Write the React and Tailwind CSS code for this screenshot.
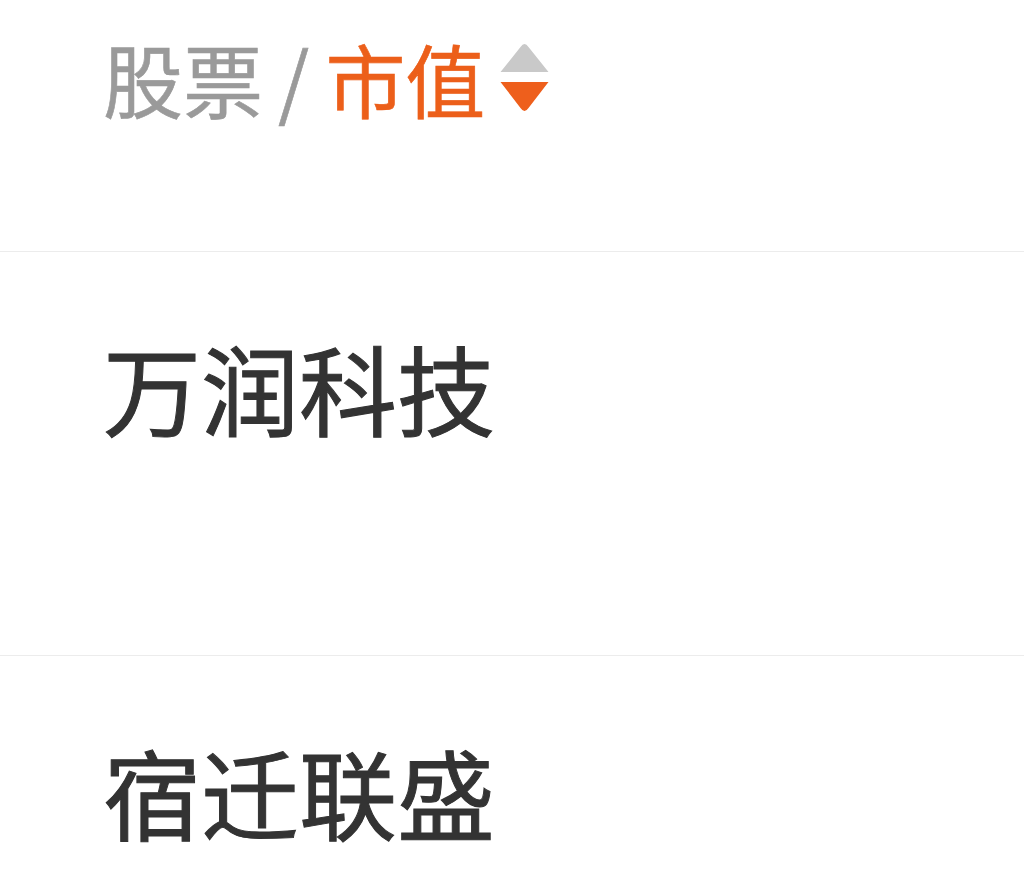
import React from "react";

const rows = ["万润科技", "宿迁联盛"];

function SortIcon() {
  return (
    <svg viewBox="0 0 50 70" className="ml-[14px] h-[70px] w-[51px]" aria-hidden="true">
      <path d="M25 2 Q27 2 29 5 L49 30 L1 30 L21 5 Q23 2 25 2 Z" fill="#c9c9c9" />
      <path d="M1 40 L49 40 L29 66 Q27 69 25 69 Q23 69 21 66 Z" fill="#ee5f1c" />
    </svg>
  );
}

export default function App() {
  return (
    <div
      className="h-screen w-full overflow-hidden bg-white"
      style={{ fontFamily: '"Noto Sans CJK SC", "Noto Sans", sans-serif' }}
    >
      {/* header */}
      <div className="h-[252px] border-b border-[#ececec] px-[103px] pt-[37px]">
        <div className="flex items-center text-[80px] leading-none [-webkit-text-stroke:0.6px_currentColor]">
          <span className="text-[#9a9a9a]">股票</span>
          <span className="ml-[15px] mr-[16px] text-[#9a9a9a]">/</span>
          <span className="text-[#ec5f1a]">市值</span>
          <SortIcon />
        </div>
      </div>

      {rows.map((name) => (
        <div key={name} className="h-[404px] border-b border-[#ececec] px-[103px] pt-[85px]">
          <div className="text-[98px] leading-none text-[#333333] [-webkit-text-stroke:1px_#333333]">
            {name}
          </div>
        </div>
      ))}
    </div>
  );
}
